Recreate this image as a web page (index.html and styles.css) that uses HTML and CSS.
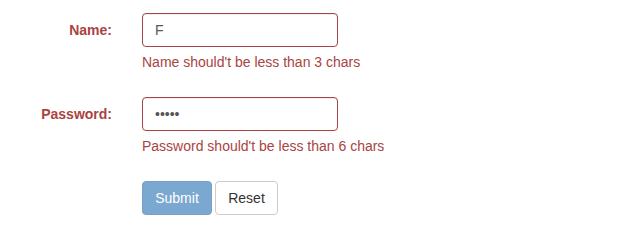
FILE: index.html
```html
<!DOCTYPE html>
<html>
<head>
<meta charset="utf-8">
<link rel="stylesheet" href="styles.css">
</head>
<body>
<form class="form">
  <div class="row">
    <label class="label" for="name">Name:</label>
    <div class="field">
      <input class="input" id="name" type="text" value="F">
      <div class="help">Name should't be less than 3 chars</div>
    </div>
  </div>
  <div class="row">
    <label class="label" for="pw">Password:</label>
    <div class="field">
      <input class="input" id="pw" type="password" value="12345">
      <div class="help">Password should't be less than 6 chars</div>
    </div>
  </div>
  <div class="row">
    <div class="label"></div>
    <div class="field buttons">
      <button type="button" class="btn btn-primary">Submit</button>
      <button type="button" class="btn btn-default">Reset</button>
    </div>
  </div>
</form>
</body>
</html>
```

FILE: styles.css
```css
html, body {
  margin: 0;
  padding: 0;
  background: #fff;
}
body {
  font-family: "Liberation Sans", Arial, Helvetica, sans-serif;
  font-size: 14px;
  line-height: 20px;
  color: #333;
}
.form {
  padding-top: 13px;
}
.row {
  display: flex;
  margin-bottom: 15px;
}
.label {
  width: 112px;
  flex: none;
  text-align: right;
  font-weight: bold;
  color: #a94442;
  padding-top: 7px;
  margin-right: 30px;
}
.field {
  width: 196px;
  flex: none;
}
.input {
  display: block;
  box-sizing: border-box;
  width: 196px;
  height: 34px;
  padding: 6px 12px;
  margin: 0;
  font-family: inherit;
  font-size: 14px;
  line-height: 20px;
  color: #555;
  background: #fff;
  border: 1px solid #a94442;
  border-radius: 4px;
  box-shadow: inset 0 1px 1px rgba(0,0,0,.075);
  outline: none;
}
.help {
  margin-top: 5px;
  margin-bottom: 10px;
  color: #a94442;
  white-space: nowrap;
}
.buttons {
  display: flex;
  gap: 3px;
}
.btn {
  box-sizing: border-box;
  height: 34px;
  padding: 6px 12px;
  font-family: inherit;
  font-size: 14px;
  line-height: 20px;
  border-radius: 4px;
  border: 1px solid transparent;
  cursor: pointer;
}
.btn-primary {
  color: #fff;
  background: #7aa8d0;
  border-color: #77a0c4;
  width: 70px;
}
.btn-default {
  color: #333;
  background: #fff;
  border-color: #ccc;
  width: 63px;
}
```
